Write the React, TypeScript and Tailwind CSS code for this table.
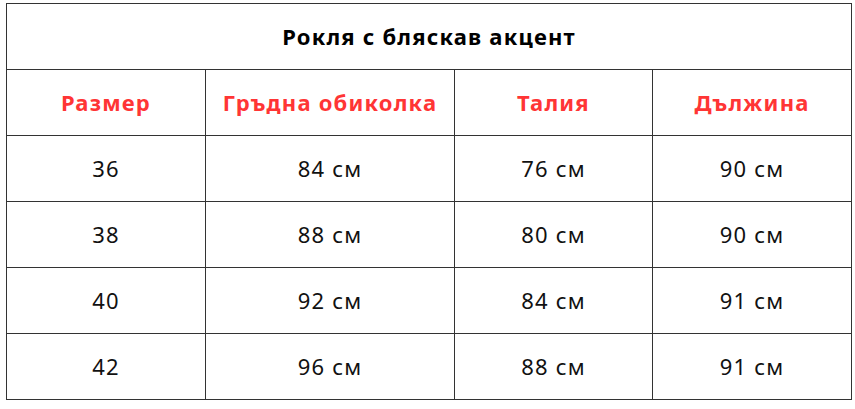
export default function App() {
  const rows = [
    ['36', '84 см', '76 см', '90 см'],
    ['38', '88 см', '80 см', '90 см'],
    ['40', '92 см', '84 см', '91 см'],
    ['42', '96 см', '88 см', '91 см'],
  ];
  const headers = ['Размер', 'Гръдна обиколка', 'Талия', 'Дължина'];

  return (
    <div className="bg-white w-[855px] h-[409px] pt-[3px] pl-[6px] font-['Noto_Sans',sans-serif]">
      <table className="border-collapse w-[845px] table-fixed">
        <colgroup>
          <col className="w-[199px]" />
          <col className="w-[249px]" />
          <col className="w-[198px]" />
          <col className="w-[199px]" />
        </colgroup>
        <thead>
          <tr className="h-[66px]">
            <th colSpan={4} className="border border-[#333] text-[22px] tracking-[1.2px] font-bold text-black">
              Рокля с бляскав акцент
            </th>
          </tr>
          <tr className="h-[66px]">
            {headers.map((h) => (
              <th key={h} className="border border-[#333] text-[22px] tracking-[1.2px] font-bold text-[#ff3535]">
                {h}
              </th>
            ))}
          </tr>
        </thead>
        <tbody>
          {rows.map((r) => (
            <tr key={r[0]} className="h-[66px]">
              {r.map((c, i) => (
                <td key={i} className="border border-[#333] text-center text-[22px] tracking-[1.2px] text-[#111]">
                  {c}
                </td>
              ))}
            </tr>
          ))}
        </tbody>
      </table>
    </div>
  );
}
